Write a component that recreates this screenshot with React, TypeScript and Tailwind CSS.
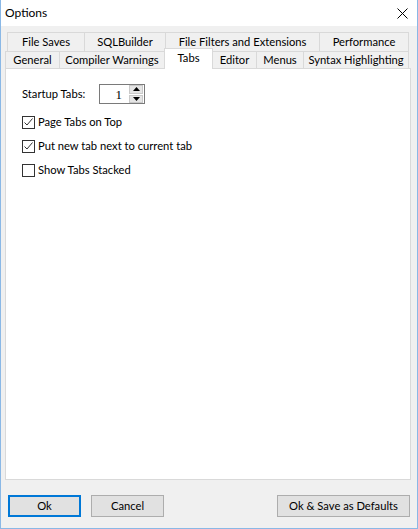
import * as React from "react"

const rowOne = [
  { label: "File Saves", w: "w-[77px]" },
  { label: "SQLBuilder", w: "w-[81px]" },
  { label: "File Filters and Extensions", w: "w-[154px]" },
  { label: "Performance", w: "w-[90px]", last: true },
]

const checks = [
  { label: "Page Tabs on Top", checked: true },
  { label: "Put new tab next to current tab", checked: true },
  { label: "Show Tabs Stacked", checked: false },
]

function CheckBox({ checked }: { checked: boolean }) {
  return (
    <span className="w-[13px] h-[13px] border border-[#333333] bg-white flex items-center justify-center shrink-0">
      {checked && (
        <svg width="11" height="11" viewBox="0 0 11 11">
          <path d="M1.5 5.5 L4 8 L9.5 1.5" fill="none" stroke="#333333" strokeWidth="1" />
        </svg>
      )}
    </span>
  )
}

function SpinBox() {
  return (
    <div className="w-[46px] h-[20px] border border-[#7a7a7a] bg-white flex items-center">
      <span className="flex-1 text-right pr-[7px] text-[13px] leading-none font-['Liberation_Serif',serif] text-black">1</span>
      <div className="w-[15px] h-[18px] flex flex-col gap-px pr-px">
        <div className="flex-1 bg-[#e5e5e5] border border-[#c9c9c9] flex items-center justify-center">
          <svg width="7" height="4" viewBox="0 0 7 4"><path d="M0 4 L3.5 0 L7 4 Z" fill="#000" /></svg>
        </div>
        <div className="flex-1 bg-[#e5e5e5] border border-[#c9c9c9] flex items-center justify-center">
          <svg width="7" height="4" viewBox="0 0 7 4"><path d="M0 0 L3.5 4 L7 0 Z" fill="#000" /></svg>
        </div>
      </div>
    </div>
  )
}

export default function App() {
  return (
    <div className="w-[418px] h-[529px] bg-[#f0f0f0] border-x border-b border-[#8ab8e6] flex flex-col font-['Segoe_UI',Lato,sans-serif] text-[11.2px] text-black overflow-hidden">
      <div className="h-[26px] bg-white flex items-center justify-between pl-[4px] pr-[9px] shrink-0">
        <span className="text-[12px]">Options</span>
        <svg width="11" height="11" viewBox="0 0 11 11">
          <path d="M0.5 0.5 L10.5 10.5 M10.5 0.5 L0.5 10.5" stroke="#000" strokeWidth="1" />
        </svg>
      </div>

      <div className="mt-[6px] flex flex-col shrink-0">
        <div className="ml-[6px] h-[19px] flex">
          {rowOne.map((t) => (
            <div
              key={t.label}
              className={
                t.last
                  ? "w-[90px] border-l border-t border-r border-[#d9d9d9] flex items-center justify-center"
                  : t.w + " border-l border-t border-[#d9d9d9] flex items-center justify-center"
              }
            >
              {t.label}
            </div>
          ))}
        </div>
        <div className="ml-[4px] h-[17px] flex items-start">
          <div className="w-[54px] h-[17px] border-l border-t border-[#d9d9d9] flex items-center justify-center">General</div>
          <div className="w-[105px] h-[17px] border-l border-t border-[#d9d9d9] flex items-center justify-center">Compiler Warnings</div>
          <div className="relative z-10 -mt-[3px] w-[49px] h-[21px] bg-white border-l border-t border-r border-[#d9d9d9] flex items-start justify-center pt-[1px]">Tabs</div>
          <div className="w-[43px] h-[17px] border-t border-[#d9d9d9] flex items-center justify-center">Editor</div>
          <div className="w-[47px] h-[17px] border-l border-t border-[#d9d9d9] flex items-center justify-center">Menus</div>
          <div className="w-[106px] h-[17px] border-l border-t border-r border-[#d9d9d9] flex items-center justify-center">Syntax Highlighting</div>
        </div>
      </div>

      <div className="ml-[4px] w-[406px] h-[412px] bg-white border border-[#d9d9d9] pl-[16px] pt-[15px] flex flex-col shrink-0">
        <div className="h-[20px] flex items-center">
          <span className="w-[77px]">Startup Tabs:</span>
          <SpinBox />
        </div>
        <div className="mt-[6px] flex flex-col">
          {checks.map((c) => (
            <div key={c.label} className="h-[24px] flex items-center gap-[3px]">
              <CheckBox checked={c.checked} />
              <span>{c.label}</span>
            </div>
          ))}
        </div>
      </div>

      <div className="mt-[15px] px-[7px] h-[22px] flex justify-between shrink-0">
        <div className="flex gap-[10px]">
          <button className="w-[73px] h-[22px] bg-[#e1e1e1] border-2 border-[#0078d7] flex items-center justify-center">Ok</button>
          <button className="w-[73px] h-[22px] bg-[#e1e1e1] border border-[#adadad] flex items-center justify-center">Cancel</button>
        </div>
        <button className="w-[133px] h-[22px] bg-[#e1e1e1] border border-[#adadad] flex items-center justify-center">Ok &amp; Save as Defaults</button>
      </div>
    </div>
  )
}
